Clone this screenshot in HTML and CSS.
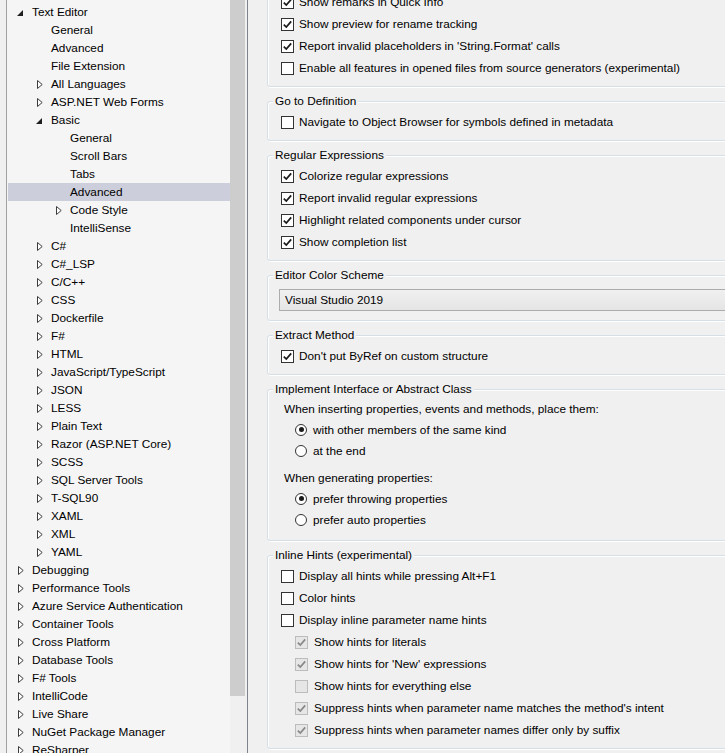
FILE: index.html
```html
<!DOCTYPE html>
<html>
  <head>
    <meta charset="utf-8" />
    <title>Options</title>
    <link rel="stylesheet" href="styles.css">
  </head>

  <body>
    <svg class="defs" width="0" height="0">
      <symbol id="closed" viewBox="0 0 6 9">
        <path d="M0.5 0.5 L5.2 4.5 L0.5 8.5 Z" fill="#fff" stroke="#3c3c3c" />
      </symbol>
      <symbol id="tick" viewBox="0 0 11 11">
        <path d="M1.8 5.6 L4.3 8.1 L9.2 2.4" fill="none" stroke="currentColor" stroke-width="1.7" />
      </symbol>
    </svg>

    <div id="tree">
      <div id="nodes">
        <div class="node l0"><span class="tw"><i class="open"></i></span>Text Editor</div>
        <div class="node l1"><span class="tw"></span>General</div>
        <div class="node l1"><span class="tw"></span>Advanced</div>
        <div class="node l1"><span class="tw"></span>File Extension</div>
        <div class="node l1"><span class="tw"><svg width="6" height="9"><use href="#closed" /></svg></span>All Languages</div>
        <div class="node l1"><span class="tw"><svg width="6" height="9"><use href="#closed" /></svg></span>ASP.NET Web Forms</div>
        <div class="node l1"><span class="tw"><i class="open"></i></span>Basic</div>
        <div class="node l2"><span class="tw"></span>General</div>
        <div class="node l2"><span class="tw"></span>Scroll Bars</div>
        <div class="node l2"><span class="tw"></span>Tabs</div>
        <div class="node l2 sel"><span class="tw"></span>Advanced</div>
        <div class="node l2"><span class="tw"><svg width="6" height="9"><use href="#closed" /></svg></span>Code Style</div>
        <div class="node l2"><span class="tw"></span>IntelliSense</div>
        <div class="node l1"><span class="tw"><svg width="6" height="9"><use href="#closed" /></svg></span>C#</div>
        <div class="node l1"><span class="tw"><svg width="6" height="9"><use href="#closed" /></svg></span>C#_LSP</div>
        <div class="node l1"><span class="tw"><svg width="6" height="9"><use href="#closed" /></svg></span>C/C++</div>
        <div class="node l1"><span class="tw"><svg width="6" height="9"><use href="#closed" /></svg></span>CSS</div>
        <div class="node l1"><span class="tw"><svg width="6" height="9"><use href="#closed" /></svg></span>Dockerfile</div>
        <div class="node l1"><span class="tw"><svg width="6" height="9"><use href="#closed" /></svg></span>F#</div>
        <div class="node l1"><span class="tw"><svg width="6" height="9"><use href="#closed" /></svg></span>HTML</div>
        <div class="node l1"><span class="tw"><svg width="6" height="9"><use href="#closed" /></svg></span>JavaScript/TypeScript</div>
        <div class="node l1"><span class="tw"><svg width="6" height="9"><use href="#closed" /></svg></span>JSON</div>
        <div class="node l1"><span class="tw"><svg width="6" height="9"><use href="#closed" /></svg></span>LESS</div>
        <div class="node l1"><span class="tw"><svg width="6" height="9"><use href="#closed" /></svg></span>Plain Text</div>
        <div class="node l1"><span class="tw"><svg width="6" height="9"><use href="#closed" /></svg></span>Razor (ASP.NET Core)</div>
        <div class="node l1"><span class="tw"><svg width="6" height="9"><use href="#closed" /></svg></span>SCSS</div>
        <div class="node l1"><span class="tw"><svg width="6" height="9"><use href="#closed" /></svg></span>SQL Server Tools</div>
        <div class="node l1"><span class="tw"><svg width="6" height="9"><use href="#closed" /></svg></span>T-SQL90</div>
        <div class="node l1"><span class="tw"><svg width="6" height="9"><use href="#closed" /></svg></span>XAML</div>
        <div class="node l1"><span class="tw"><svg width="6" height="9"><use href="#closed" /></svg></span>XML</div>
        <div class="node l1"><span class="tw"><svg width="6" height="9"><use href="#closed" /></svg></span>YAML</div>
        <div class="node l0"><span class="tw"><svg width="6" height="9"><use href="#closed" /></svg></span>Debugging</div>
        <div class="node l0"><span class="tw"><svg width="6" height="9"><use href="#closed" /></svg></span>Performance Tools</div>
        <div class="node l0"><span class="tw"><svg width="6" height="9"><use href="#closed" /></svg></span>Azure Service Authentication</div>
        <div class="node l0"><span class="tw"><svg width="6" height="9"><use href="#closed" /></svg></span>Container Tools</div>
        <div class="node l0"><span class="tw"><svg width="6" height="9"><use href="#closed" /></svg></span>Cross Platform</div>
        <div class="node l0"><span class="tw"><svg width="6" height="9"><use href="#closed" /></svg></span>Database Tools</div>
        <div class="node l0"><span class="tw"><svg width="6" height="9"><use href="#closed" /></svg></span>F# Tools</div>
        <div class="node l0"><span class="tw"><svg width="6" height="9"><use href="#closed" /></svg></span>IntelliCode</div>
        <div class="node l0"><span class="tw"><svg width="6" height="9"><use href="#closed" /></svg></span>Live Share</div>
        <div class="node l0"><span class="tw"><svg width="6" height="9"><use href="#closed" /></svg></span>NuGet Package Manager</div>
        <div class="node l0"><span class="tw"><svg width="6" height="9"><use href="#closed" /></svg></span>ReSharper</div>
      </div>
      <div id="vscroll"><div class="thumb"></div></div>
    </div>

    <div id="page">
      <fieldset class="cut">
        <div class="opt"><span class="box"><svg><use href="#tick" /></svg></span>Show remarks in Quick Info</div>
        <div class="opt"><span class="box"><svg><use href="#tick" /></svg></span>Show preview for rename tracking</div>
        <div class="opt"><span class="box"><svg><use href="#tick" /></svg></span>Report invalid placeholders in 'String.Format' calls</div>
        <div class="opt"><span class="box"></span>Enable all features in opened files from source generators (experimental)</div>
      </fieldset>

      <fieldset>
        <legend>Go to Definition</legend>
        <div class="opt"><span class="box"></span>Navigate to Object Browser for symbols defined in metadata</div>
      </fieldset>

      <fieldset>
        <legend>Regular Expressions</legend>
        <div class="opt"><span class="box"><svg><use href="#tick" /></svg></span>Colorize regular expressions</div>
        <div class="opt"><span class="box"><svg><use href="#tick" /></svg></span>Report invalid regular expressions</div>
        <div class="opt"><span class="box"><svg><use href="#tick" /></svg></span>Highlight related components under cursor</div>
        <div class="opt"><span class="box"><svg><use href="#tick" /></svg></span>Show completion list</div>
      </fieldset>

      <fieldset class="scheme">
        <legend>Editor Color Scheme</legend>
        <div class="combo">Visual Studio 2019</div>
      </fieldset>

      <fieldset>
        <legend>Extract Method</legend>
        <div class="opt"><span class="box"><svg><use href="#tick" /></svg></span>Don't put ByRef on custom structure</div>
      </fieldset>

      <fieldset class="impl">
        <legend>Implement Interface or Abstract Class</legend>
        <div class="caption">When inserting properties, events and methods, place them:</div>
        <div class="opt rad"><span class="radio on"></span>with other members of the same kind</div>
        <div class="opt rad"><span class="radio"></span>at the end</div>
        <div class="caption second">When generating properties:</div>
        <div class="opt rad"><span class="radio on"></span>prefer throwing properties</div>
        <div class="opt rad"><span class="radio"></span>prefer auto properties</div>
      </fieldset>

      <fieldset>
        <legend>Inline Hints (experimental)</legend>
        <div class="opt"><span class="box"></span>Display all hints while pressing Alt+F1</div>
        <div class="opt"><span class="box"></span>Color hints</div>
        <div class="opt"><span class="box"></span>Display inline parameter name hints</div>
        <div class="opt sub"><span class="box dis"><svg><use href="#tick" /></svg></span>Show hints for literals</div>
        <div class="opt sub"><span class="box dis"><svg><use href="#tick" /></svg></span>Show hints for 'New' expressions</div>
        <div class="opt sub"><span class="box dis"></span>Show hints for everything else</div>
        <div class="opt sub"><span class="box dis"><svg><use href="#tick" /></svg></span>Suppress hints when parameter name matches the method's intent</div>
        <div class="opt sub"><span class="box dis"><svg><use href="#tick" /></svg></span>Suppress hints when parameter names differ only by suffix</div>
      </fieldset>
    </div>
  </body>
</html>
```

FILE: styles.css
```css
body {
  margin: 0;
  height: 753px;
  overflow: hidden;
  display: flex;
  background-color: #f0f0f0;
  color: #000;
  font-family: "Segoe UI", "Liberation Sans", sans-serif;
  font-size: 11.8px;
}

.defs {
  position: absolute;
}

/* tree view on the left */

#tree {
  display: flex;
  flex: none;
  width: 240px;
  margin-left: 6px;
  border-left: 1px solid #a0a0a0;
  border-right: 1px solid #7d828d;
  background-color: #f5f5f5;
}

#nodes {
  width: 223px;
  padding-top: 3px;
}

.node {
  display: flex;
  align-items: center;
  height: 18px;
  margin-left: 1px;
  white-space: nowrap;
}

.l0 {
  padding-left: 10px;
}

.l1 {
  padding-left: 29px;
}

.l2 {
  padding-left: 48px;
}

.sel {
  background-color: #cccedb;
}

.tw {
  display: flex;
  align-items: center;
  flex: none;
  width: 14px;
  height: 18px;
}

.open {
  width: 0;
  height: 0;
  margin: 1px 0 0 -1px;
  border-left: 6px solid transparent;
  border-bottom: 6px solid #1e1e1e;
}

#vscroll {
  width: 17px;
  background-color: #f0f0f0;
}

.thumb {
  width: 15px;
  height: 696px;
  background-color: #cdcdcd;
}

/* option groups on the right */

#page {
  flex: 1;
  overflow: hidden;
  padding-left: 19px;
}

fieldset {
  width: 500px;
  min-width: 0;
  margin: 0 0 6px 0;
  padding: 2px 0 7px 0;
  border: 1px solid #d5dfe5;
  border-radius: 3px;
  box-shadow: inset 1px 1px 0 #fff, 1px 1px 0 #fff;
}

fieldset.cut {
  margin-top: -12px;
}

legend {
  margin-left: 5px;
  padding: 0 2px;
  line-height: 16px;
  background-color: #f0f0f0;
}

.opt {
  display: flex;
  align-items: center;
  height: 22px;
  padding-left: 13px;
  white-space: nowrap;
}

.opt.sub {
  padding-left: 27px;
}

.box {
  display: flex;
  flex: none;
  width: 11px;
  height: 11px;
  margin-right: 5px;
  border: 1px solid #333;
  background-color: #fff;
  color: #1a1a1a;
}

.box svg {
  width: 11px;
  height: 11px;
}

.sub .box {
  margin-right: 6px;
}

.box.dis {
  border-color: #bcbcbc;
  background-color: #e6e6e6;
  color: #888;
}

.caption {
  display: flex;
  align-items: center;
  height: 20px;
  padding-left: 16px;
}

.caption.second {
  margin-top: 7px;
}

.opt.rad {
  height: 21px;
  padding-left: 27px;
}

.radio {
  display: flex;
  align-items: center;
  justify-content: center;
  flex: none;
  width: 10px;
  height: 10px;
  margin-right: 6px;
  border: 1px solid #333;
  border-radius: 50%;
  background-color: #fff;
}

.radio.on::after {
  content: "";
  width: 5px;
  height: 5px;
  border-radius: 50%;
  background-color: #1a1a1a;
}

.impl {
  padding-bottom: 10px;
}

.scheme {
  padding: 0;
}

.combo {
  display: flex;
  align-items: center;
  height: 20px;
  margin: 6px 0 9px 11px;
  padding-left: 5px;
  border: 1px solid #acacac;
  background: linear-gradient(#f0f0f0, #e5e5e5);
}
```
